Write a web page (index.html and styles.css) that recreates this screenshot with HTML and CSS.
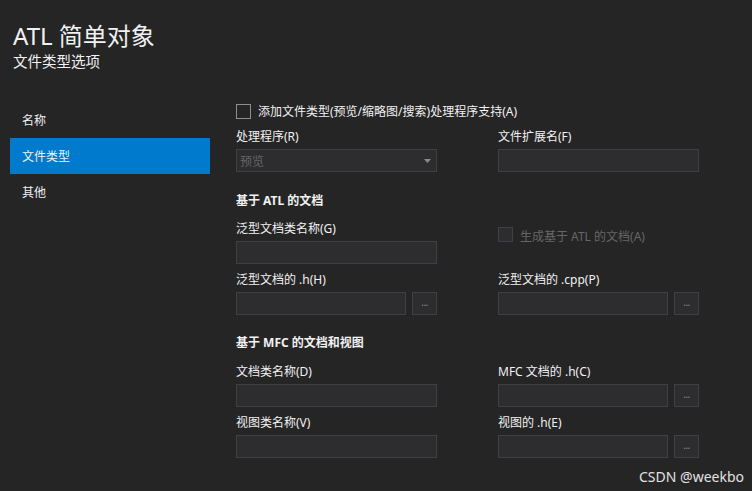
FILE: index.html
```html
<!DOCTYPE html>
<html lang="zh-CN">

<head>
    <meta charset="UTF-8">
    <meta name="viewport" content="width=device-width, initial-scale=1.0">
    <title>ATL 简单对象</title>
    <link rel="stylesheet" href="styles.css">
</head>

<body>
    <div class="page">
        <header class="header">
            <h1 class="title">ATL 简单对象</h1>
            <div class="subtitle">文件类型选项</div>
        </header>

        <div class="main">
            <nav class="nav">
                <div class="nav-item">名称</div>
                <div class="nav-item active">文件类型</div>
                <div class="nav-item">其他</div>
            </nav>

            <section class="content">
                <label class="check-row">
                    <span class="checkbox"></span>
                    <span class="check-text">添加文件类型(预览/缩略图/搜索)处理程序支持(A)</span>
                </label>

                <div class="row row-first">
                    <div class="field">
                        <div class="field-label">处理程序(R)</div>
                        <div class="select disabled">
                            <span>预览</span>
                            <svg class="select-arrow" width="7" height="4" viewBox="0 0 7 4">
                                <path d="M0 0 H7 L3.5 4 Z" fill="#8a8a8a" />
                            </svg>
                        </div>
                    </div>
                    <div class="field">
                        <div class="field-label">文件扩展名(F)</div>
                        <div class="input"></div>
                    </div>
                </div>

                <div class="section-title">基于 ATL 的文档</div>

                <div class="row row-after-title">
                    <div class="field">
                        <div class="field-label">泛型文档类名称(G)</div>
                        <div class="input"></div>
                    </div>
                    <label class="check-row check-cell disabled">
                        <span class="checkbox"></span>
                        <span class="check-text">生成基于 ATL 的文档(A)</span>
                    </label>
                </div>

                <div class="row">
                    <div class="field">
                        <div class="field-label">泛型文档的 .h(H)</div>
                        <div class="input-group">
                            <div class="input"></div>
                            <div class="browse-btn">...</div>
                        </div>
                    </div>
                    <div class="field">
                        <div class="field-label">泛型文档的 .cpp(P)</div>
                        <div class="input-group">
                            <div class="input"></div>
                            <div class="browse-btn">...</div>
                        </div>
                    </div>
                </div>

                <div class="section-title section-second">基于 MFC 的文档和视图</div>

                <div class="row row-after-title2">
                    <div class="field">
                        <div class="field-label">文档类名称(D)</div>
                        <div class="input"></div>
                    </div>
                    <div class="field">
                        <div class="field-label">MFC 文档的 .h(C)</div>
                        <div class="input-group">
                            <div class="input"></div>
                            <div class="browse-btn">...</div>
                        </div>
                    </div>
                </div>

                <div class="row">
                    <div class="field">
                        <div class="field-label">视图类名称(V)</div>
                        <div class="input"></div>
                    </div>
                    <div class="field">
                        <div class="field-label">视图的 .h(E)</div>
                        <div class="input-group">
                            <div class="input"></div>
                            <div class="browse-btn">...</div>
                        </div>
                    </div>
                </div>
            </section>
        </div>

        <div class="watermark">CSDN @weekbo</div>
    </div>
</body>

</html>
```

FILE: styles.css
```css
html,
body {
    margin: 0;
    padding: 0;
    background-color: #252526;
}

.page {
    width: 752px;
    height: 491px;
    position: relative;
    overflow: hidden;
    background-color: #252526;
    color: #f1f1f1;
    font-family: "Noto Sans", "Noto Sans CJK SC", sans-serif;
    font-size: 12px;
}

.header {
    padding: 19px 0 0 13px;
}

.title {
    margin: 0;
    font-size: 24px;
    font-weight: normal;
    line-height: 34px;
}

.subtitle {
    font-size: 14.5px;
    line-height: 17px;
}

.main {
    display: flex;
    margin-top: 32px;
}

.nav {
    width: 200px;
    margin-left: 10px;
}

.nav-item {
    height: 36px;
    box-sizing: border-box;
    padding: 2px 0 0 12px;
    line-height: 34px;
}

.nav-item.active {
    background-color: #007acc;
}

.content {
    margin-left: 26px;
    width: 463px;
}

.check-row {
    display: flex;
    align-items: center;
    gap: 7px;
    height: 18px;
    line-height: 16px;
}

.check-text {
    padding-top: 1px;
}

.checkbox {
    width: 15px;
    height: 15px;
    box-sizing: border-box;
    border: 1px solid #8e8e8e;
    background-color: #252526;
    flex-shrink: 0;
}

.check-row.disabled {
    color: #656565;
}

.check-row.disabled .checkbox {
    border-color: #3f3f46;
    background-color: #2d2d30;
}

.check-cell {
    align-items: flex-start;
    height: auto;
    padding-top: 8px;
}

.check-cell .check-text {
    padding-top: 2px;
}

.row {
    display: grid;
    grid-template-columns: 201px 201px;
    column-gap: 61px;
    margin-top: 6px;
}

.row-first {
    margin-top: 7px;
}

.row-after-title {
    margin-top: 10px;
}

.row-after-title2 {
    margin-top: 11px;
}

.field-label {
    padding-top: 2px;
    line-height: 16px;
    margin-bottom: 4px;
    white-space: nowrap;
}

.input,
.select {
    height: 23px;
    box-sizing: border-box;
    border: 1px solid #3f3f46;
    background-color: #2d2d30;
}

.select {
    display: flex;
    align-items: center;
    justify-content: space-between;
    padding: 1px 4px 0 3px;
    line-height: 21px;
}

.select.disabled {
    color: #656565;
}

.select-arrow {
    margin-right: 1px;
}

.input-group {
    display: flex;
    gap: 6px;
}

.input-group .input {
    flex: 1;
}

.browse-btn {
    width: 25px;
    height: 23px;
    box-sizing: border-box;
    border: 1px solid #3f3f46;
    background-color: #2d2d30;
    color: #8a8a8a;
    font-size: 10px;
    line-height: 18px;
    text-align: center;
    letter-spacing: -0.5px;
}

.section-title {
    margin-top: 19px;
    padding-top: 2px;
    font-weight: bold;
    line-height: 16px;
}

.section-second {
    margin-top: 18px;
}

.watermark {
    position: absolute;
    right: 8px;
    bottom: 5px;
    font-size: 14px;
    line-height: 18px;
    color: #e2e2e2;
}
```
